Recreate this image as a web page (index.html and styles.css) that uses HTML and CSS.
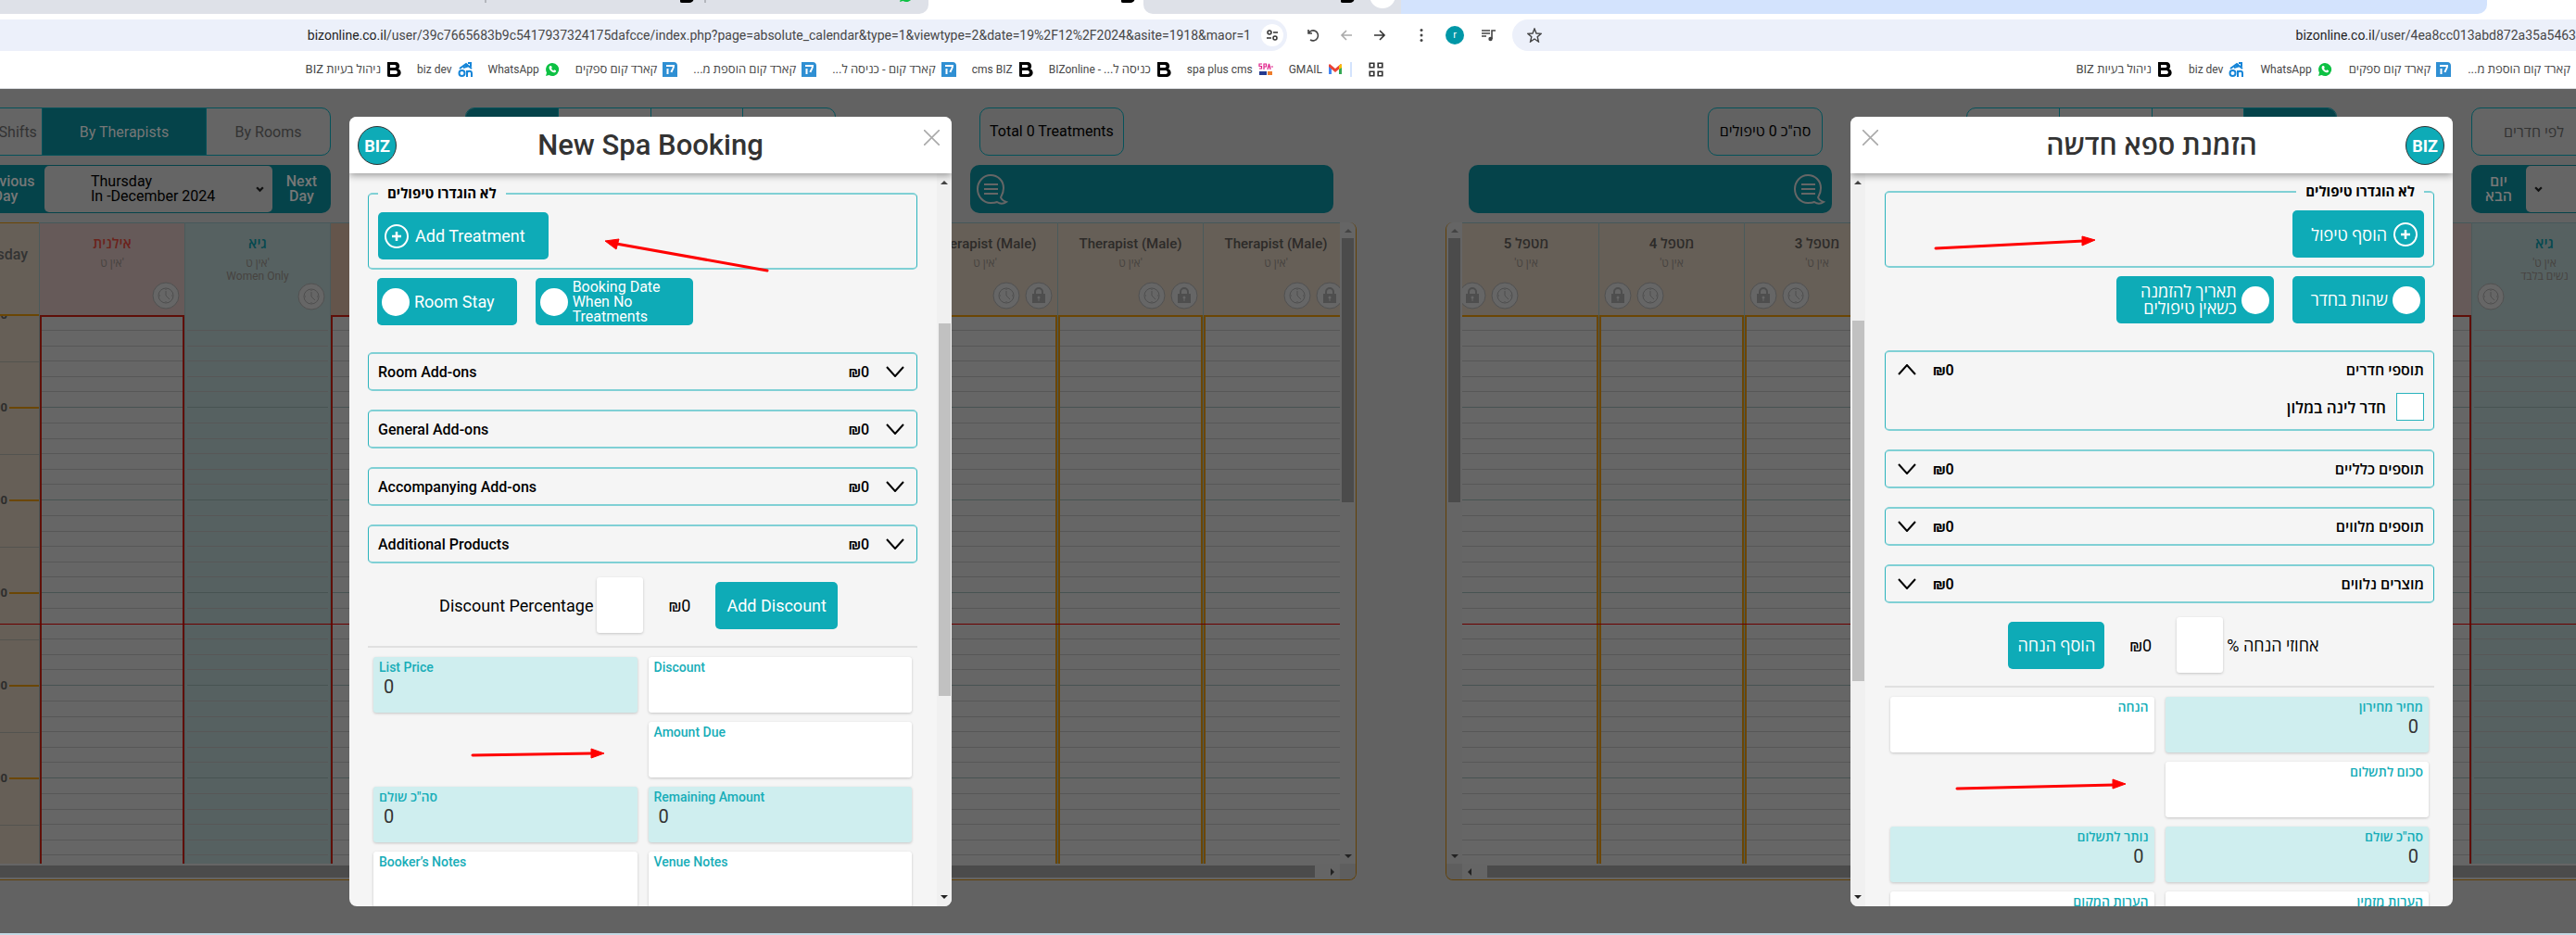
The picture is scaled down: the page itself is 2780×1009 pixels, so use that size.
FILE: index.html
```html
<!DOCTYPE html>
<html lang="en">
<head>
<meta charset="utf-8">
<title>New Spa Booking</title>
<link rel="stylesheet" href="styles.css">
</head>
<body>
<svg class="sprite" aria-hidden="true">
  <symbol id="clock" viewBox="0 0 30 30"><circle cx="15" cy="15" r="14" fill="#666" stroke="#515151" stroke-width="1"/><circle cx="15" cy="15" r="8" fill="none" stroke="#4f4f4f"/><path d="M15 10v5l4 4M15 8v1M15 21v1M8 15h1M21 15h1" fill="none" stroke="#4f4f4f"/></symbol>
  <symbol id="lock" viewBox="0 0 30 30"><circle cx="15" cy="15" r="14" fill="#666" stroke="#515151" stroke-width="1"/><path d="M11 14v-3a4 4 0 0 1 8 0v3" fill="none" stroke="#4e4e4e" stroke-width="2"/><path d="M8 13h14v10H8z" fill="#4e4e4e"/><circle cx="15" cy="17" r="1.5" fill="#666"/><path d="M14.500 17h1v4h-1z" fill="#666"/></symbol>
  <symbol id="b" viewBox="0 0 16 16"><path fill="#000" fill-rule="evenodd" d="M1 0h9c4 0 5.500 5 2.800 7.300C17.500 9.500 16 16 11 16H3C1 16 1 15 1 14zM4 3v3h5c2 0 2-3 0-3zM4 9v4h6c2.500 0 2.500-4 0-4z"/></symbol>
  <symbol id="on" viewBox="0 0 16 16"><path d="M2 7l7-5 6 5M11 1h3v4M6 6l6-2" fill="none" stroke="#1585d8" stroke-width="2"/><circle cx="4.500" cy="12" r="3" fill="none" stroke="#1585d8" stroke-width="2"/><path d="M10 16V9M10 12c0-3 5-3 5 0v4" fill="none" stroke="#1585d8" stroke-width="2"/></symbol>
  <symbol id="wa" viewBox="0 0 16 16"><path fill="#0dc143" d="M8 1a7 7 0 1 1-3.500 13L1 15l1-3.500A7 7 0 0 1 8 1z"/><path fill="#fff" d="M5.500 4l1.500 0 .8 2-.8 1c.5 1 1.200 1.700 2.200 2.200l1-.9 1.900.9c0 1.600-1.300 2.300-2.500 2C6.800 10.500 5 8.500 4.600 6.500c-.1-1 .3-2 .9-2.500z"/></symbol>
  <symbol id="k" viewBox="0 0 16 16"><path fill="#2f8fd3" d="M0 0h12c3 0 4 2 4 4v12H0z"/><path d="M4 4h8c0 4-2 4-2.500 7M5.500 7v6" fill="none" stroke="#fff" stroke-width="2"/></symbol>
  <symbol id="spa" viewBox="0 0 16 16"><path d="M4 2H1v2.500h2.500V7H1M6 8V2h2.500v3H6M10 8l1.500-6L13 8M13.500 5H16" fill="none" stroke="#e0218a" stroke-width="1.200"/><path d="M1 10h8v4H1z" fill="#243a8f"/><path d="M10 10h5v4h-5z" fill="#ee7c2b"/></symbol>
  <symbol id="gm" viewBox="0 0 16 16"><path fill="#4285f4" d="M1 4v9h3V7z"/><path fill="#34a853" d="M15 4v9h-3V7z"/><path fill="#ea4335" d="M1 3l1-1 6 5 6-5 1 1v2l-7 6-7-6z"/><path fill="#fbbc04" d="M12 4l2-2 1 1v3l-3 2z"/></symbol>
  <symbol id="chat" viewBox="0 0 36 34"><path d="M16 2c8 0 14 6 14 14 0 5-2 8-3 10 1 3 3 4 6 5-3 2-7 2-10 0-2 1-4 1-7 1C8 32 2 25 2 17S8 2 16 2zM9 12h15M9 17h15M9 22h15" fill="none" stroke="#666" stroke-width="2"/></symbol>
  <symbol id="down" viewBox="0 0 20 12"><path d="M1 1l9 10 9-10" fill="none" stroke="#000" stroke-width="2"/></symbol>
  <symbol id="x" viewBox="0 0 16 16"><path d="M0 0l16 16M16 0L0 16" fill="none" stroke="#aaa" stroke-width="1.500"/></symbol>
  <symbol id="plus" viewBox="0 0 26 26"><circle cx="13" cy="13" r="12" fill="none" stroke="#fff" stroke-width="2"/><path d="M13 8v10M8 13h10" stroke="#fff" stroke-width="2.500"/></symbol>
</svg>

<main class="desk">
<section class="win win-a">
  <div class="tabs"><div class="tab tab-first"><i class="sep"></i><svg class="fav"><use href="#b"/></svg><i class="sep"></i><svg class="fav"><use href="#wa"/></svg></div><div class="tab-on"><svg class="fav"><use href="#b"/></svg></div><div class="tab tab-last"><svg class="fav"><use href="#b"/></svg><i class="newtab"></i></div></div>
  <div class="addr">
    <div class="pill pill-a"><span class="url"><b>bizonline.co.il</b>/user/39c7665683b9c5417937324175dafcce/index.php?page=absolute_calendar&amp;type=1&amp;viewtype=2&amp;date=19%2F12%2F2024&amp;asite=1918&amp;maor=1</span>
      <i class="tune"><svg width="14" height="14" viewBox="0 0 14 14" fill="none" stroke="#333" stroke-width="1.500"><circle cx="4" cy="4" r="2"/><path d="M8 4h5M1 10h5"/><circle cx="10" cy="10" r="2"/></svg></i></div>
    <svg class="nav" viewBox="0 0 16 16"><path d="M3 2v4h4M3 6a5.500 5.500 0 1 1 2 7" fill="none" stroke="#444" stroke-width="1.600"/></svg>
    <svg class="nav" viewBox="0 0 16 16"><path d="M14 8H3M8 3L3 8l5 5" fill="none" stroke="#aaa" stroke-width="1.600"/></svg>
    <svg class="nav" viewBox="0 0 16 16"><path d="M2 8h11M8 3l5 5-5 5" fill="none" stroke="#333" stroke-width="1.600"/></svg>
  </div>
  <nav class="marks marks-a">
    <a href="#" class="he"><span>BIZ ניהול בעיות</span><svg><use href="#b"/></svg></a>
    <a href="#"><span>biz dev</span><svg><use href="#on"/></svg></a>
    <a href="#"><span>WhatsApp</span><svg><use href="#wa"/></svg></a>
    <a href="#" class="he"><span>קארד קום ספקים</span><svg><use href="#k"/></svg></a>
    <a href="#" class="he"><span dir="rtl">קארד קום הוספת מ...</span><svg><use href="#k"/></svg></a>
    <a href="#" class="he"><span dir="rtl">קארד קום - כניסה ל...</span><svg><use href="#k"/></svg></a>
    <a href="#"><span>cms BIZ</span><svg><use href="#b"/></svg></a>
    <a href="#"><span>BIZonline - <span dir="rtl">כניסה ל...</span></span><svg><use href="#b"/></svg></a>
    <a href="#"><span>spa plus cms</span><svg><use href="#spa"/></svg></a>
    <a href="#"><span>GMAIL</span><svg><use href="#gm"/></svg></a>
    <i class="bar"></i>
    <svg class="apps" viewBox="0 0 16 16"><path d="M2 2h4v4H2zM10 2h4v4h-4zM2 10h4v4H2zM10 10h4v4h-4z" fill="none" stroke="#333" stroke-width="1.500"/></svg>
  </nav>

  <div class="page" dir="ltr">
    <div class="tools">
      <div class="seg"><button class="w-shift">By Shifts</button><button class="on w-ther">By Therapists</button><button class="w-room">By Rooms</button></div>
      <div class="seg even"><button class="on" aria-label="Day"></button><button aria-label="Week"></button><button aria-label="Month"></button><button aria-label="List"></button></div>
      <div class="total">Total 0 Treatments</div>
      <div class="day"><button class="step prev">Previous<br>Day</button><button class="pick"><span>Thursday<br>In -December 2024</span><svg viewBox="0 0 8 6"><path d="M1 1l3 3 3-3" fill="none" stroke="#111" stroke-width="2"/></svg></button><button class="step">Next<br>Day</button></div>
      <div class="msg"><svg><use href="#chat"/></svg></div>
    </div>
    <div class="cal">
      <div class="sheet">
        <div class="times"><div class="th">Thursday</div><div class="hours"><p>08:00</p><p>09:00</p><p>10:00</p><p>11:00</p><p>12:00</p><p>13:00</p></div></div>
        <div class="col pink"><div class="head"><h3 class="he">אילנית</h3><p>אין ט'</p><div class="ic"><svg><use href="#clock"/></svg></div></div><div class="slots"></div></div>
        <div class="col blue"><div class="head"><h3 class="he">גיא</h3><p>אין ט'</p><p>Women Only</p><div class="ic"><svg><use href="#clock"/></svg></div></div><div class="slots"></div></div>
        <div class="col orange"><div class="head"></div><div class="slots"></div></div>
        <div class="col"><div class="head"></div><div class="slots"></div></div>
        <div class="col"><div class="head"></div><div class="slots"></div></div>
        <div class="col"><div class="head"></div><div class="slots"></div></div>
        <div class="col"><div class="head"><h3>Therapist (Male)</h3><p>אין ט'</p><div class="ic"><svg><use href="#clock"/></svg><svg><use href="#lock"/></svg></div></div><div class="slots"></div></div>
        <div class="col"><div class="head"><h3>Therapist (Male)</h3><p>אין ט'</p><div class="ic"><svg><use href="#clock"/></svg><svg><use href="#lock"/></svg></div></div><div class="slots"></div></div>
        <div class="col"><div class="head"><h3>Therapist (Male)</h3><p>אין ט'</p><div class="ic"><svg><use href="#clock"/></svg><svg><use href="#lock"/></svg></div></div><div class="slots"></div></div>
        <i class="now"></i>
      </div>
      <div class="vbar"><i class="up"></i><i class="thumb"></i><i class="dn"></i></div>
      <div class="hbar"><i class="thumb"></i><i class="side"></i></div><div class="corner"></div>
    </div>

    <section class="modal">
      <header><span class="logo">BIZ</span><h1>New Spa Booking</h1><button class="close" aria-label="Close"><svg><use href="#x"/></svg></button></header>
      <div class="body">
        <form class="form">
          <fieldset class="box"><legend>לא הוגדרו טיפולים</legend><button type="button" class="btn add"><svg><use href="#plus"/></svg>Add Treatment</button></fieldset>
          <div class="toggles"><label class="btn tog"><input type="checkbox">Room Stay</label><label class="btn tog wide"><input type="checkbox"><span class="tight">Booking Date When No Treatments</span></label></div>
          <div class="box acc"><button type="button"><span>Room Add-ons</span><bdi>₪0</bdi><svg><use href="#down"/></svg></button></div>
          <div class="box acc"><button type="button"><span>General Add-ons</span><bdi>₪0</bdi><svg><use href="#down"/></svg></button></div>
          <div class="box acc"><button type="button"><span>Accompanying Add-ons</span><bdi>₪0</bdi><svg><use href="#down"/></svg></button></div>
          <div class="box acc"><button type="button"><span>Additional Products</span><bdi>₪0</bdi><svg><use href="#down"/></svg></button></div>
          <div class="disc"><label for="pa">Discount Percentage</label><input id="pa" type="text"><bdi>₪0</bdi><button type="button" class="btn">Add Discount</button></div>
          <div class="fields">
            <label class="ro">List Price<input value="0" readonly></label><label>Discount<input></label>
            <label class="solo">Amount Due<input></label>
            <label class="ro he">סה"כ שולם<input value="0" readonly></label><label class="ro">Remaining Amount<input value="0" readonly></label>
            <label>Booker’s Notes<input></label><label>Venue Notes<input></label>
          </div>
        </form>
        <div class="mbar"><i class="up"></i><i class="thumb"></i><i class="dn"></i></div>
      </div>
      <svg class="arrows" viewBox="0 0 650 852"><path d="M451 166L288 137M133 689l130-2" stroke="#f00" stroke-width="3" fill="none" stroke-linecap="round"/><path d="M276 134l15-2-3 11zM275 687l-14-5v10z" fill="#f00" stroke="#f00" stroke-width="1"/></svg>
    </section>
  </div>
</section>

<section class="win win-b">
  <div class="tabs tabs-b"><div class="tab-blue"></div></div>
  <div class="addr addr-b">
    <svg class="nav" viewBox="0 0 16 16" fill="#444"><circle cx="8" cy="2.500" r="1.500"/><circle cx="8" cy="8" r="1.500"/><circle cx="8" cy="13.500" r="1.500"/></svg>
    <span class="avatar">r</span>
    <svg class="nav" viewBox="0 0 16 16"><path d="M1 3h9M1 6h9M1 9h5M12 12V3h4" fill="none" stroke="#444" stroke-width="1.600"/><circle cx="10.500" cy="12" r="2.200" fill="#444"/></svg>
    <div class="pill pill-b"><svg class="nav" viewBox="0 0 16 16"><path d="M8 1l2 5 5 .4-3.800 3.300L12.400 15 8 12l-4.400 3 1.200-5.300L1 6.400 6 6z" fill="none" stroke="#444" stroke-width="1.400"/></svg><span class="url"><b>bizonline.co.il</b>/user/4ea8cc013abd872a35a5463</span></div>
  </div>
  <nav class="marks marks-b">
    <a href="#" class="he"><span>BIZ ניהול בעיות</span><svg><use href="#b"/></svg></a>
    <a href="#"><span>biz dev</span><svg><use href="#on"/></svg></a>
    <a href="#"><span>WhatsApp</span><svg><use href="#wa"/></svg></a>
    <a href="#" class="he"><span>קארד קום ספקים</span><svg><use href="#k"/></svg></a>
    <a href="#" class="he"><span dir="rtl">קארד קום הוספת מ...</span></a>
  </nav>

  <div class="page" dir="rtl" lang="he">
    <div class="tools">
      <div class="seg"><button class="w-shift"></button><button class="on w-ther"></button><button class="w-room">לפי חדרים</button></div>
      <div class="seg even"><button class="on" aria-label="יום"></button><button aria-label="שבוע"></button><button aria-label="חודש"></button><button aria-label="רשימה"></button></div>
      <div class="total">סה"כ 0 טיפולים</div>
      <div class="day"><button class="step prev"></button><button class="pick"><span></span><svg viewBox="0 0 8 6"><path d="M1 1l3 3 3-3" fill="none" stroke="#111" stroke-width="2"/></svg></button><button class="step he">יום<br>הבא</button></div>
      <div class="msg"><svg><use href="#chat"/></svg></div>
    </div>
    <div class="cal">
      <div class="sheet">
        <div class="times"></div>
        <div class="col pink"><div class="head"></div><div class="slots"></div></div>
        <div class="col blue"><div class="head"><h3>גיא</h3><p>אין ט'</p><p>נשים בלבד</p><div class="ic"><svg><use href="#clock"/></svg></div></div><div class="slots"></div></div>
        <div class="col pink"><div class="head"></div><div class="slots"></div></div>
        <div class="col"><div class="head"></div><div class="slots"></div></div>
        <div class="col"><div class="head"></div><div class="slots"></div></div>
        <div class="col"><div class="head"></div><div class="slots"></div></div>
        <div class="col"><div class="head"><h3>מטפל 3</h3><p>אין ט'</p><div class="ic"><svg><use href="#clock"/></svg><svg><use href="#lock"/></svg></div></div><div class="slots"></div></div>
        <div class="col"><div class="head"><h3>מטפל 4</h3><p>אין ט'</p><div class="ic"><svg><use href="#clock"/></svg><svg><use href="#lock"/></svg></div></div><div class="slots"></div></div>
        <div class="col"><div class="head"><h3>מטפל 5</h3><p>אין ט'</p><div class="ic"><svg><use href="#clock"/></svg><svg><use href="#lock"/></svg></div></div><div class="slots"></div></div>
        <i class="now"></i>
      </div>
      <div class="vbar"><i class="up"></i><i class="thumb"></i><i class="dn"></i></div>
      <div class="hbar"><i class="thumb"></i><i class="side"></i></div><div class="corner"></div>
    </div>

    <section class="modal">
      <header><span class="logo">BIZ</span><h1>הזמנת ספא חדשה</h1><button class="close" aria-label="סגור"><svg><use href="#x"/></svg></button></header>
      <div class="body">
        <form class="form form-b">
          <fieldset class="box"><legend>לא הוגדרו טיפולים</legend><button type="button" class="btn add"><svg><use href="#plus"/></svg>הוסף טיפול</button></fieldset>
          <div class="toggles"><label class="btn tog"><input type="checkbox">שהות בחדר</label><label class="btn tog wide"><input type="checkbox"><span>תאריך להזמנה<br>כשאין טיפולים</span></label></div>
          <div class="box acc"><button type="button"><span>תוספי חדרים</span><bdi>₪0</bdi><svg class="flip"><use href="#down"/></svg></button><label class="check"><input type="checkbox">חדר לינה במלון</label></div>
          <div class="box acc"><button type="button"><span>תוספים כלליים</span><bdi>₪0</bdi><svg><use href="#down"/></svg></button></div>
          <div class="box acc"><button type="button"><span>תוספים מלווים</span><bdi>₪0</bdi><svg><use href="#down"/></svg></button></div>
          <div class="box acc"><button type="button"><span>מוצרים נלווים</span><bdi>₪0</bdi><svg><use href="#down"/></svg></button></div>
          <div class="disc"><label for="pb">אחוזי הנחה %</label><input id="pb" type="text"><bdi>₪0</bdi><button type="button" class="btn">הוסף הנחה</button></div>
          <div class="fields">
            <label class="ro">מחיר מחירון<input value="0" readonly></label><label>הנחה<input></label>
            <label>סכום לתשלום<input></label><span></span>
            <label class="ro">סה"כ שולם<input value="0" readonly></label><label class="ro">נותר לתשלום<input value="0" readonly></label>
            <label>הערות מזמין<input></label><label>הערות המקום<input></label>
          </div>
        </form>
        <div class="mbar"><i class="up"></i><i class="thumb"></i><i class="dn"></i></div>
      </div>
      <svg class="arrows" viewBox="0 0 650 852"><path d="M92 142l160-8M115 725l170-4" stroke="#f00" stroke-width="3" fill="none" stroke-linecap="round"/><path d="M264 133l-14-4v10zM297 720l-14-5v10z" fill="#f00" stroke="#f00" stroke-width="1"/></svg>
    </section>
  </div>
</section>
</main>
</body>
</html>
```
FILE: styles.css
```css
* { box-sizing: border-box; }
body { margin: 0; font-family: Roboto, "Open Sans", "Noto Sans", sans-serif; font-size: 16px; background: #626262; }
button, input { font: inherit; color: inherit; margin: 0; border: 0; background: none; }
h1, h3, p { margin: 0; font-weight: 500; }
i { display: block; flex: none; }
svg { flex: none; }
.sprite { position: absolute; width: 0; height: 0; }

.desk { display: flex; min-height: 100vh; }
.win { display: flex; flex-direction: column; min-width: 0; overflow: hidden; background: #fff; }
.win-a { flex: 1512 1 0; }
.win-b { flex: 1268 1 0; }

/* browser chrome */
.tabs { display: flex; height: 15px; overflow: hidden; background: #fff; }
.tab { background: #dee1e8; display: flex; align-items: flex-start; }
.tab-first { flex: 1; justify-content: flex-end; padding-right: 16px; border-bottom-right-radius: 10px; }
.tab-first .sep { width: 2px; height: 3px; background: #b4b7bd; margin: 0 208px 0 11px; }
.tab-on { width: 232px; display: flex; align-items: flex-start; justify-content: flex-end; padding-right: 9px; }
.tab-last { width: 278px; justify-content: flex-end; gap: 16px; padding-right: 6px; border-bottom-left-radius: 10px; }
.fav { width: 16px; height: 16px; margin-top: -13px; }
.newtab { width: 28px; height: 28px; margin-top: -19px; border-radius: 50%; background: #fff; }
.tab-blue { width: 1172px; background: #d3e3fd; border-bottom-right-radius: 10px; }
.addr { display: flex; align-items: center; gap: 20px; height: 46px; padding: 0 15px 0 0; }
.addr-b { padding: 0 0 0 14px; gap: 18px; }
.nav { width: 16px; height: 16px; }
.pill { flex: 1; min-width: 0; height: 34px; display: flex; align-items: center; background: #ecf0fa; }
.pill-a { justify-content: flex-end; gap: 11px; padding-right: 4px; border-radius: 0 17px 17px 0; }
.pill-b { justify-content: space-between; padding-left: 16px; border-radius: 17px 0 0 17px; }
.url { font-size: 14px; color: #474747; white-space: nowrap; }
.url b { font-weight: 400; color: #1f1f1f; }
.tune { width: 24px; height: 24px; border-radius: 50%; background: #fff; display: grid; place-items: center; }
.avatar { width: 20px; height: 20px; border-radius: 50%; background: #0097a7; color: #fff; font-size: 11px; line-height: 20px; text-align: center; }
.marks { display: flex; align-items: center; justify-content: flex-end; gap: 17px; height: 35px; padding-bottom: 6px; border-bottom: 1px solid #dadce0; }
.marks-a { padding-right: 18px; }
.marks-b { padding-right: 6px; gap: 18px; }
.marks a { display: flex; align-items: center; gap: 6px; font-size: 12px; line-height: 16px; color: #474747; text-decoration: none; white-space: nowrap; }
.marks a.he, .marks span span { font-size: 13px; }
.marks a svg { width: 16px; height: 16px; }
.bar { width: 2px; height: 16px; background: #d3e3fd; margin-left: -9px; }
.apps { width: 18px; height: 18px; }

/* dimmed calendar page */
.page { position: relative; flex: 1; display: flex; flex-direction: column; align-items: flex-end; gap: 10px; overflow: hidden; background: #626262; padding: 20px 0 57px; padding-inline-end: 48px; border-bottom: 2px solid #c3d9e4; }
.tools { flex: none; width: 1493px; display: grid; grid-template-columns: 386px 400px 392px; grid-template-rows: 52px 52px; gap: 10px 145px; }
.seg { display: flex; border: 1px solid #05525a; border-radius: 10px; overflow: hidden; background: #656565; }
.seg button { border-inline-end: 1px solid #05525a; color: #333; }
.seg button:last-child { border: 0; }
.seg .on { background: #05434a; color: #777; }
.w-shift { width: 74px; padding: 0; }
.w-ther { width: 177px; }
.w-room { flex: 1; }
.even button { flex: 1; }
.total { justify-self: start; min-width: 124px; margin-inline-start: 10px; padding: 0 10px; border: 1px solid #05525a; border-radius: 10px; line-height: 50px; text-align: center; color: #000; }
.day { grid-row: 2; display: flex; background: #05434a; border-radius: 10px; overflow: hidden; padding: 1px 0; }
.step { padding: 0 15px; min-width: 58px; line-height: 16px; font-weight: 500; color: #777; }
.prev { width: 77px; padding: 0; padding-inline: 4px 11px; }
.pick { flex: 1; display: flex; align-items: center; justify-content: space-between; background: #656565; border-radius: 5px; padding: 0; padding-inline: 50px 9px; line-height: 16px; text-align: start; color: #000; }
.pick svg { width: 9px; height: 7px; }
.msg { grid-column: 3; background: #05434a; border-radius: 10px; padding: 9px 6px; }
.msg svg { width: 36px; height: 34px; }

.cal { flex: 1; width: 1493px; min-height: 400px; display: grid; grid-template-columns: minmax(0, 1fr) 17px; grid-template-rows: minmax(0, 1fr) 17px; border: 1px solid #624006; border-top: 0; border-radius: 8px; overflow: hidden; }
.sheet { position: relative; display: flex; overflow: hidden; background: #666; }
.times { flex: 0 0 70px; min-width: 0; overflow: hidden; display: flex; flex-direction: column; background: #665f57; }
.th { flex: none; height: 101px; padding: 24px 12px 0 0; border: solid #6b4604; border-width: 1px 0 2px; line-height: 20px; font-weight: 500; color: #333; display: flex; justify-content: flex-end; }
.hours { flex: 1; overflow: hidden; background: repeating-linear-gradient(#0000 0 49px, #53534f 49px 50px, #0000 50px 100px); }
.hours p { display: flex; align-items: center; gap: 2px; justify-content: flex-end; height: 16px; margin-bottom: 84px; font-size: 13px; font-weight: 700; line-height: 16px; color: #2d2d2d; }
.hours p:first-child { margin-top: -9px; }
.hours p::after { content: ""; width: 32px; height: 2px; background: #6b4604; }
.col { flex: 0 0 157px; display: flex; flex-direction: column; border-inline-start: 1px solid #4a5a5b; }
.head { flex: none; height: 100px; padding-top: 11px; border-top: 1px solid #46585a; background: #665f57; text-align: center; display: flex; flex-direction: column; color: #474340; }
.head h3 { font-size: 15px; line-height: 22px; color: #2d2b29; }
.head p { font-size: 12px; line-height: 14px; font-weight: 400; }
.head h3 + p { margin-top: 3px; }
.ic { margin-top: auto; display: flex; justify-content: flex-end; gap: 5px; padding: 0 5px 6px; }
.ic svg { width: 30px; height: 30px; }
.slots { flex: 1; border: 2px solid #6b4604; border-bottom: 0; background: repeating-linear-gradient(#0000 0 14px, #575757 14px 15px, #0000 15px 31px, #575757 31px 32px, #0000 32px 47px, #575757 47px 48px, #0000 48px 64px, #575757 64px 65px, #0000 65px 80px, #575757 80px 81px, #0000 81px 97px, #475352 97px 98px, #0000 98px 100px); }
.pink .head { background: #665a59; }
.pink h3 { color: #6b231c; }
.blue .head, .blue .slots { background-color: #566161; }
.blue h3 { color: #05484f; }
.blue .slots { border-color: #566161; }
.orange .head { background: #64554b; }
.pink .slots, .orange .slots { border-color: #5f0f08; }
.now { position: absolute; inset: 433px 0 auto; height: 1px; background: #6b0000; }
.vbar { display: flex; flex-direction: column; align-items: center; background: #656565; padding: 7px 0 6px; }
.up { border: 4px solid #0000; border-top: 0; border-bottom: 4px solid #444; }
.dn { border: 4px solid #0000; border-bottom: 0; border-top: 4px solid #222; margin-top: auto; }
.vbar .thumb { width: 13px; height: 285px; margin-top: 6px; background: #4b4b4b; }
.hbar { display: flex; align-items: center; background: #656565; }
.hbar .thumb { flex: 1; height: 13px; background: #4b4b4b; }
.side { margin-inline: 17px 6px; border: 4px solid #0000; border-inline-end: 0; border-inline-start: 4px solid #222; }
.corner { background: #5e5e5e; }

/* booking dialog */
.modal { position: absolute; top: 30px; bottom: 29px; inset-inline-end: 485px; width: 650px; display: flex; flex-direction: column; border-radius: 8px; overflow: hidden; background: #f5f5f5; }
.modal header { position: relative; flex: none; display: flex; align-items: center; height: 61px; padding: 0 9px; background: #fff; box-shadow: 0 2px 8px #0006; }
.modal h1 { flex: 1; font-size: 31px; line-height: 40px; text-align: center; color: #333; }
.logo { width: 42px; height: 42px; border: 1px solid #333; border-radius: 50%; background: #0eabb7; color: #fff; font-size: 18px; font-weight: 700; line-height: 42px; text-align: center; }
.close { width: 42px; height: 42px; padding: 4px; display: flex; justify-content: flex-end; }
.close svg { width: 17px; height: 17px; }
.body { flex: 1; min-height: 0; display: flex; }
.form { flex: 1; min-width: 0; overflow: hidden; padding: 12px 0 0; padding-inline: 20px 21px; }
.form-b { padding-top: 10px; }
.box { margin: 0; border: 1px solid #2ab3bd; border-width: 2px 1px; border-color: #80d0d5 #2ab3bd; border-radius: 5px; }
fieldset.box { padding: 10px 10px 9px; min-width: 0; }
legend { padding: 0 10px; font-size: 15px; font-weight: 700; line-height: 20px; color: #000; }
.btn { display: flex; align-items: center; height: 51px; padding: 0 10px; border-radius: 5px; background: #0eabb7; color: #fff; font-size: 18px; white-space: nowrap; }
.add { gap: 7px; padding-inline: 7px 25px; }
.add svg { width: 26px; height: 26px; }
.toggles { display: flex; gap: 20px; padding: 9px 10px 29px; }
.tog { gap: 5px; padding-inline: 5px 24px; line-height: 18px; }
.tog input { appearance: none; flex: none; width: 30px; height: 30px; border-radius: 50%; background: #fff; }
.form-b .add, .form-b .tog { padding-inline-end: 20px; }
.toggles .wide { width: 170px; padding-inline-end: 10px; white-space: normal; }
.tight { width: 115px; padding-right: 10px; font-size: 16px; line-height: 16px; }
.acc { margin-bottom: 20px; font-weight: 500; }
.acc button { width: 100%; height: 38px; display: flex; align-items: center; gap: 18px; padding: 0; padding-inline: 10px 13px; text-align: start; }
.acc button span { flex: 1; }
.acc svg { width: 20px; height: 12px; }
.flip { transform: scaleY(-1); }
bdi { direction: ltr; }
.check { display: flex; align-items: center; gap: 11px; padding: 6px 10px 9px; font-size: 17px; }
.check input { appearance: none; width: 30px; height: 30px; border: 1px solid #2ab3bd; background: #fff; }
.disc { display: flex; align-items: center; justify-content: center; gap: 27px; margin-top: -5px; padding-bottom: 14px; padding-inline-end: 9px; border-bottom: 2px solid #e0e0e0; font-size: 18px; }
.disc label { margin-inline-end: -23px; }
.disc input { width: 50px; height: 60px; border-radius: 3px; background: #fff; box-shadow: 0 1px 3px #0003; }
[dir="ltr"] .disc .btn { padding: 0 12px; }
.fields { display: grid; grid-template-columns: 1fr 1fr; grid-auto-rows: 60px; gap: 10px 12px; padding: 10px 6px; }
.fields label { display: flex; flex-direction: column; padding: 3px 6px 0; border-radius: 3px; background: #fff; box-shadow: 0 1px 3px #0003; font-size: 14px; font-weight: 500; line-height: 17px; color: #17adb8; }
.fields .ro { background: #cfeeef; }
.fields .solo { grid-column: 2; }
.fields input { width: 100%; height: 24px; padding: 0 5px; font-size: 20px; font-weight: 400; color: #333; }
.mbar { flex: none; width: 16px; display: flex; flex-direction: column; align-items: center; padding: 8px 0; background: #f0f0f0; }
.mbar .thumb { width: 13px; height: 402px; margin-top: 150px; background: #c1c1c1; }
.form-b + .mbar .thumb { height: 389px; margin-top: 147px; }
.arrows { position: absolute; inset: 0; width: 650px; height: 852px; pointer-events: none; }

/* Hebrew text needs a heavier cut to read as medium */
h3.he, .step.he, .fields .he, [lang="he"] h1, [lang="he"] h3, .form-b .acc, .form-b .fields label { font-weight: 600; }
[lang="he"] h1 { font-size: 30px; }
.form-b .fields input { font-weight: 400; }
```
